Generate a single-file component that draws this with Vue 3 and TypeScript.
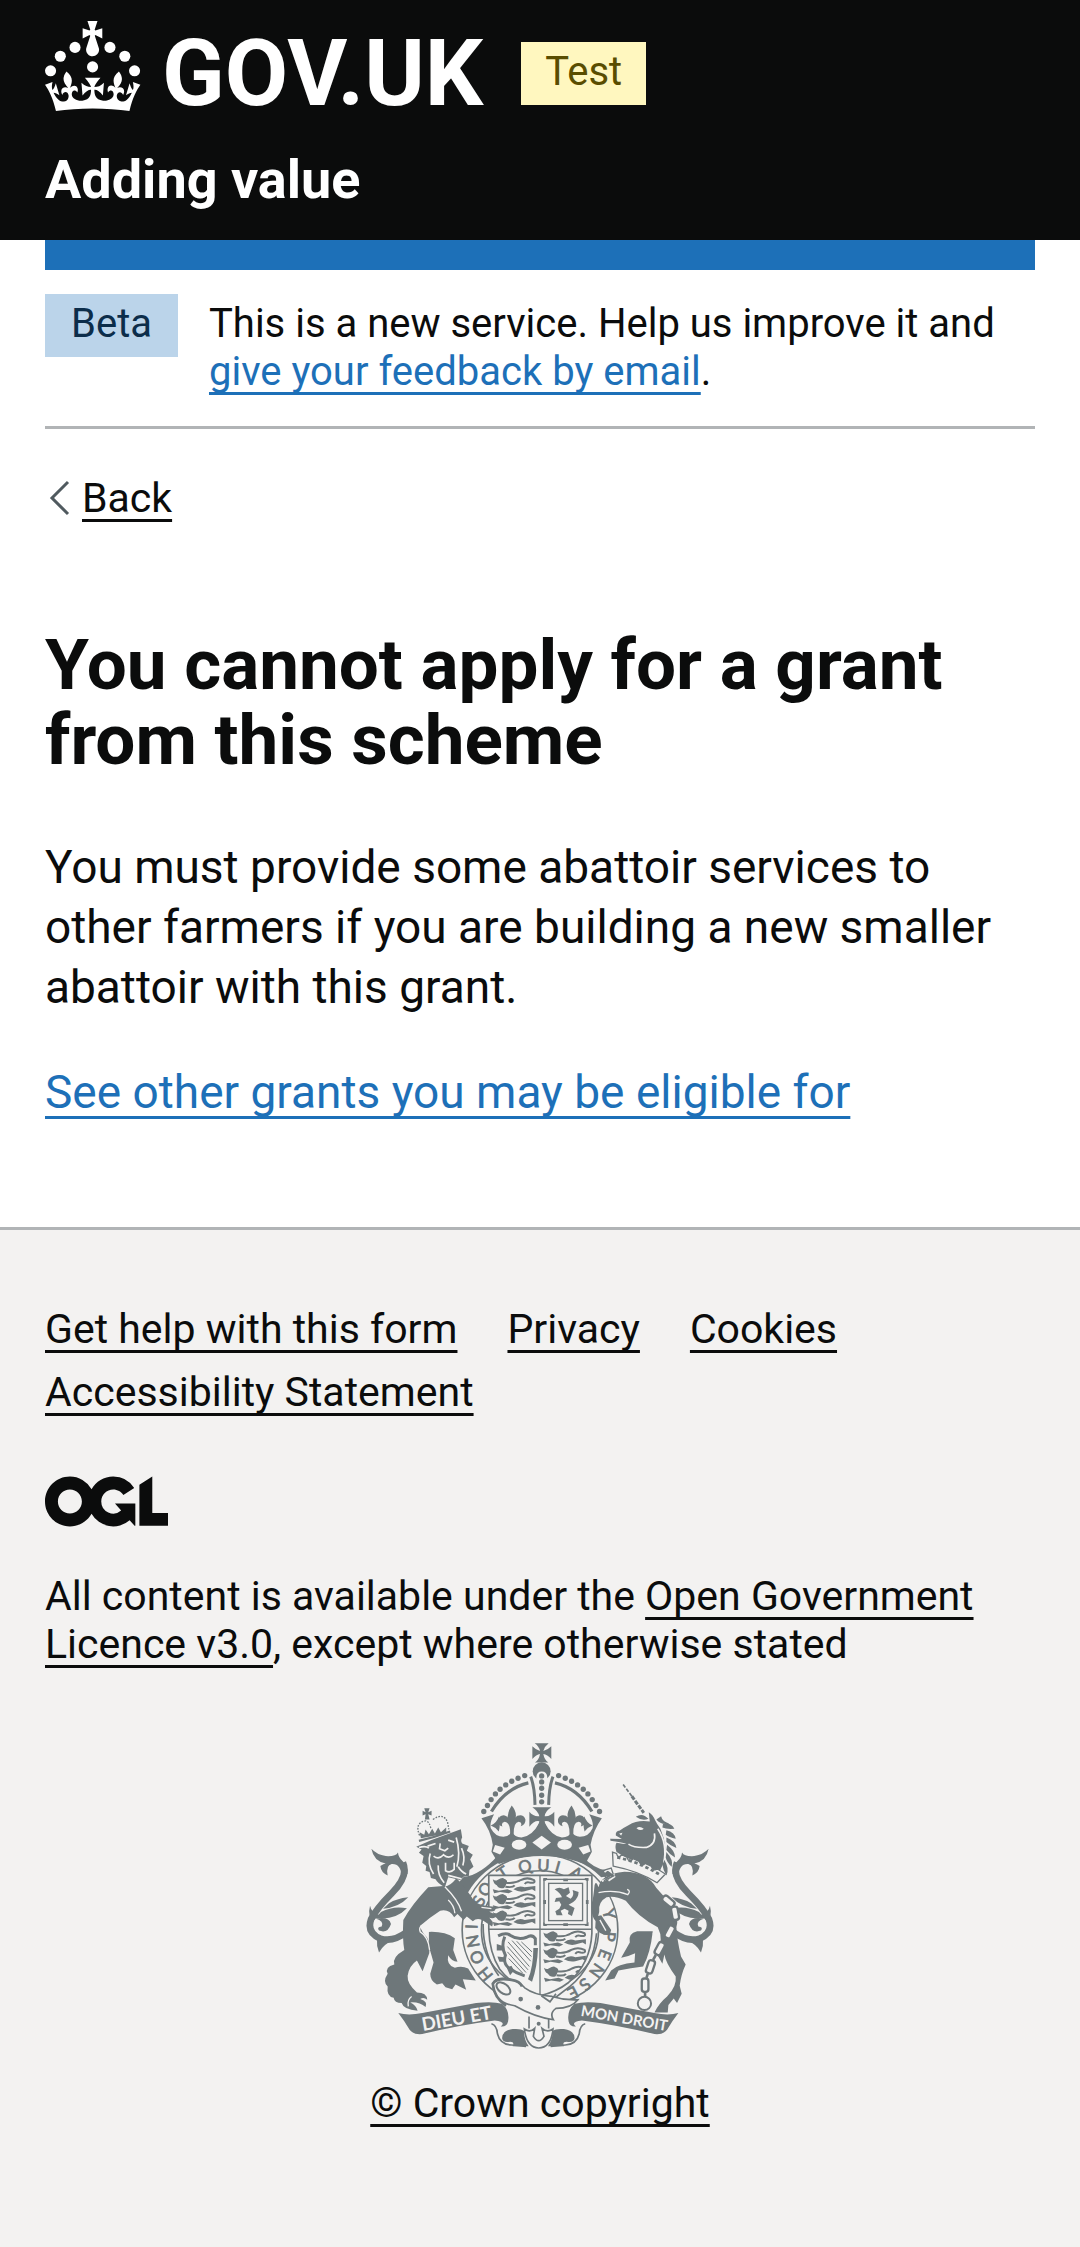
<script setup lang="ts">
interface FooterLink {
  label: string
  href: string
}

interface RingLetter {
  char: string
  x: number
  y: number
}

const footerLinks: FooterLink[] = [
  { label: 'Get help with this form', href: '#help' },
  { label: 'Privacy', href: '#privacy' },
  { label: 'Cookies', href: '#cookies' },
  { label: 'Accessibility Statement', href: '#accessibility' },
]

// Pearls on the right arch of the crown; the left arch mirrors them.
const pearls: [number, number][] = [
  [632, 166], [652, 174], [671, 183], [689, 194], [706, 207],
  [720, 221], [733, 238], [744, 256], [755, 274],
]

// Motto letters, placed by their centre on the garter ring.
const ringLetters: RingLetter[] = [
  { char: 'H', x: 412, y: 763 },
  { char: 'O', x: 387, y: 712 },
  { char: 'N', x: 375, y: 664 },
  { char: 'I', x: 371, y: 620 },
  { char: 'S', x: 393, y: 543 },
  { char: 'O', x: 412, y: 508 },
  { char: 'T', x: 465, y: 459 },
  { char: 'Q', x: 531, y: 439 },
  { char: 'U', x: 586, y: 437 },
  { char: 'I', x: 629, y: 442 },
  { char: 'A', x: 684, y: 460 },
  { char: 'Y', x: 783, y: 582 },
  { char: 'P', x: 784, y: 650 },
  { char: 'E', x: 770, y: 704 },
  { char: 'N', x: 746, y: 752 },
  { char: 'S', x: 711, y: 793 },
  { char: 'E', x: 675, y: 818 },
]

function ringTransform(letter: RingLetter): string {
  const angle = (Math.atan2(letter.x - 576, 630 - letter.y) * 180) / Math.PI
  return `translate(${letter.x} ${letter.y}) rotate(${angle.toFixed(1)})`
}

// Origins of the walking lions in the first and fourth quarters.
const shieldLions: [number, number][] = [
  [434, 474], [434, 522], [434, 572],
  [586, 634], [586, 684], [588, 740],
]

// Chain links: centre and tilt.
const links: [number, number, number][] = [
  [962, 544, -50], [982, 580, -10], [966, 636, 28],
  [936, 686, 28], [908, 741, 18], [892, 796, 0],
]
</script>

<template>
  <div class="page">
    <header class="header">
      <div class="brand">
        <a class="logo" href="#home" aria-label="GOV.UK">
          <svg class="crown" viewBox="0 0 64 60" aria-hidden="true">
            <circle cx="20" cy="17.6" r="3.7" />
            <circle cx="10.2" cy="23.5" r="3.7" />
            <circle cx="3.7" cy="33.2" r="3.7" />
            <circle cx="31.7" cy="30.6" r="3.7" />
            <circle cx="43.3" cy="17.6" r="3.7" />
            <circle cx="53.2" cy="23.5" r="3.7" />
            <circle cx="59.7" cy="33.2" r="3.7" />
            <path
              d="M33.1,9.8c.2-.1.3-.3.5-.5l4.6,2.4v-6.8l-4.6,1.5c-.1-.2-.3-.3-.5-.5l1.9-5.9h-6.7l1.9,5.9c-.2.1-.3.3-.5.5l-4.6-1.5v6.8l4.6-2.4c.1.2.3.3.5.5l-2.6,8c-.9,2.8,1.2,5.7,4.1,5.7h0c3,0,5.1-2.9,4.1-5.7l-2.6-8ZM37,37.9s-3.4,3.8-4.1,6.1c2.2,0,4.2-.5,6.4-2.8l-.7,8.5c-2-2.8-4.4-4.1-5.7-3.8.1,3.1.5,6.7,5.8,7.2,3.7.3,6.7-1.5,7-3.8.4-2.6-2-4.3-3.7-1.6-1.4-4.5,2.4-6.1,4.9-3.2-1.9-4.5-1.8-7.7,2.4-10.9,3,4,2.6,7.3-1.2,11.1,2.4-1.3,6.2,0,4,4.6-1.2-2.8-3.7-2.2-4.2.2-.3,1.7.7,3.7,3,4.2,1.9.3,4.7-.9,7-5.9-1.3,0-2.4.7-3.9,1.7l2.4-8c.6,2.3,1.4,3.7,2.2,4.5.6-1.6.5-2.8,0-5.3l5,1.8c-2.6,3.6-5.2,8.7-7.3,17.5-7.4-1.1-15.7-1.7-24.5-1.7h0c-8.8,0-17.1.6-24.5,1.7-2.1-8.9-4.7-13.9-7.3-17.5l5-1.8c-.5,2.5-.6,3.7,0,5.3.8-.8,1.6-2.3,2.2-4.5l2.4,8c-1.5-1-2.6-1.7-3.9-1.7,2.3,5,5.2,6.2,7,5.9,2.3-.4,3.3-2.4,3-4.2-.5-2.4-3-3.1-4.2-.2-2.2-4.6,1.6-6,4-4.6-3.7-3.7-4.2-7.1-1.2-11.1,4.2,3.2,4.3,6.4,2.4,10.9,2.5-2.8,6.3-1.3,4.9,3.2-1.8-2.7-4.1-1-3.7,1.6.3,2.3,3.3,4.1,7,3.8,5.4-.5,5.7-4.2,5.8-7.2-1.3-.2-3.7,1-5.7,3.8l-.7-8.5c2.2,2.3,4.2,2.7,6.4,2.8-.7-2.3-4.1-6.1-4.1-6.1h10.6,0Z"
            />
          </svg>
          <span class="wordmark">GOV.UK</span>
        </a>
        <strong class="tag tag-test">Test</strong>
      </div>
      <a class="service" href="#service">Adding value</a>
    </header>

    <div class="container">
      <div class="bar"></div>
      <div class="phase">
        <strong class="tag tag-beta">Beta</strong>
        <p class="phase-text">
          This is a new service. Help us improve it and
          <a class="link" href="#feedback">give your feedback by email</a>.
        </p>
      </div>
      <a class="back" href="#back">
        <svg class="chevron" viewBox="0 0 22 36" aria-hidden="true">
          <path d="M20 2 4 18 20 34" />
        </svg>
        <span class="back-text">Back</span>
      </a>
      <main class="main">
        <h1>You cannot apply for a grant from this scheme</h1>
        <p>
          You must provide some abattoir services to other farmers if you are
          building a new smaller abattoir with this grant.
        </p>
        <p><a class="link" href="#grants">See other grants you may be eligible for</a></p>
      </main>
    </div>

    <footer class="footer">
      <ul class="footer-links">
        <li v-for="item in footerLinks" :key="item.label">
          <a class="footer-link" :href="item.href">{{ item.label }}</a>
        </li>
      </ul>
      <svg class="ogl" viewBox="0 0 483.2 195.7" role="img" aria-label="Open Government Licence">
        <path
          d="M421.5 142.8V.1l-50.7 32.3v161.1h112.4v-50.7zm-122.3-9.6A47.12 47.12 0 0 1 221 97.8c0-26 21.1-47.1 47.1-47.1 16.7 0 31.4 8.7 39.7 21.8l42.7-27.2A97.63 97.63 0 0 0 268.1 0c-36.5 0-68.3 20.1-85.1 49.7A98 98 0 0 0 97.8 0C43.9 0 0 43.9 0 97.8s43.9 97.8 97.8 97.8c36.5 0 68.3-20.1 85.1-49.7a97.76 97.76 0 0 0 149.6 25.4l19.4 22.2h3v-87.8h-80l24.3 27.5zM97.8 145c-26 0-47.1-21.1-47.1-47.1s21.1-47.1 47.1-47.1 47.1 21.1 47.1 47.1S123.8 145 97.8 145"
        />
      </svg>
      <p class="licence">
        All content is available under the
        <a class="footer-link" href="#ogl">Open Government Licence v3.0</a>, except where otherwise stated
      </p>

      <a class="copyright" href="#copyright">
        <svg class="crest" viewBox="54 68 1044 920" aria-hidden="true">
          <defs>
            <g id="fleur">
              <path d="M491 256Q506 274 503 291Q500 304 495 314H487Q479 300 479 288Q480 272 491 256Z" />
              <path d="M486 345Q488 307 470 305Q458 307 463 319Q444 314 451 295Q461 280 475 288Q486 294 491 312Q496 294 508 287Q526 281 532 297Q534 313 518 318Q524 306 512 305Q496 307 497 345Z" />
              <path d="M428 316Q446 308 453 288Q458 312 452 334Q444 322 428 316Z" />
            </g>
            <g id="tail">
              <path class="line" stroke-width="20" d="M176 636Q134 668 96 656Q54 638 68 598Q84 566 130 520Q182 468 164 428" />
              <path d="M69 386Q86 404 112 408Q142 410 149 397Q150 412 164 424Q180 440 178 462L160 470Q158 430 130 432Q112 436 118 466Q98 458 96 438Q106 430 112 430Q76 424 69 386Z" />
              <path d="M180 532Q144 536 122 550L104 566Q150 564 180 532ZM176 565Q136 556 98 576L82 594Q140 602 176 565ZM65 557Q57 588 74 604L92 584Q70 580 65 557Z" />
              <path d="M82 596Q122 588 128 612Q118 642 92 632Q84 622 100 620Q108 604 82 596ZM86 660Q84 680 92 698Q106 672 134 662Z" />
            </g>
            <g id="passant">
              <path d="M0 4Q8 10 14 6Q30-4 34 2Q46 6 42 14Q38 26 34 30Q18 34 12 22Q4 20 0 4Z" />
              <path class="line" stroke-width="6" d="M38 14Q66 18 84 6Q104-4 124 6Q130 16 112 14Q102 10 96 18M38 26Q60 30 66 22" />
              <path d="M62 34Q78 20 96 28L128 24V40L118 34 96 40Q80 44 62 34ZM0 34 18 38 44 34 60 40 48 46 22 42 4 46Z" />
            </g>
            <clipPath id="shield-clip">
              <path d="M422 466H732V640Q728 730 662 788Q626 816 576 828Q500 806 455 748Q424 700 422 628Z" />
            </clipPath>
            <path id="dexter-scroll" d="M150 880Q180 888 222 880Q320 862 384 850Q432 844 462 852Q486 872 480 905Q476 922 458 920Q476 906 440 902Q330 916 222 943Q196 946 184 930Q170 906 150 880Z" />
            <g id="fold">
              <path class="line" stroke-width="5" d="M430 912Q446 916 448 942Q456 974 490 976L534 980" />
              <path d="M462 956Q462 932 494 928Q520 926 528 934Q528 960 542 980H494Q500 966 486 966Q464 970 462 956Z" />
            </g>
          </defs>

          <!-- Garter ring and motto -->
          <ellipse class="paper outline" cx="576" cy="630" rx="234" ry="226" />
          <ellipse class="paper outline" cx="576" cy="630" rx="176" ry="178" />
          <text
            v-for="(letter, index) in ringLetters"
            :key="`ring-${index}`"
            class="motto"
            :transform="ringTransform(letter)"
            dy="17"
          >{{ letter.char }}</text>
          <path d="M345 472Q400 464 450 405L490 410Q400 446 358 520L330 490Z" />
          <path d="M700 405Q740 450 780 452L800 466 760 472Q730 440 690 424Z" />

          <!-- Crown -->
          <path d="M560 69H602Q590 78 586 92Q598 90 610 78V116Q598 102 586 101Q589 118 601 127H561Q573 118 576 101Q565 103 553 116V78Q565 90 576 92Q573 78 560 69Z" />
          <circle cx="581" cy="153" r="27" />
          <path class="paper" d="M565 260V172Q566 154 581 154Q597 154 598 172V260Z" />
          <circle v-for="y in [167, 185, 204, 225, 245]" :key="`bead-${y}`" cx="581" :cy="y" r="8" />
          <path class="line" stroke-width="9" d="M548 169Q560 200 561 254M615 169Q603 200 602 254" />
          <g v-for="[x, y] in pearls" :key="`pearl-${x}`">
            <circle :cx="x" :cy="y" r="8" />
            <circle :cx="1162 - x" :cy="y" r="8" />
          </g>
          <path class="line" stroke-width="10" d="M621 188Q690 204 732 274M541 188Q472 204 430 274" />
          <path d="M400 294 438 282Q424 306 428 324Q442 350 466 350Q484 348 491 334Q500 352 520 352Q552 350 574 308H590Q612 350 642 352Q664 352 671 334Q678 348 696 350Q722 350 734 324Q738 306 724 282L762 294Q736 330 728 374L732 395 712 432Q581 384 452 432L430 395 434 374Q428 330 400 294Z" />
          <use href="#fleur" />
          <use href="#fleur" transform="translate(1162 0) scale(-1 1)" />
          <path d="M553 261H610Q592 272 590 288Q606 290 619 275V320Q606 300 590 303Q592 322 612 344H550Q572 322 574 303Q558 300 544 320V275Q556 290 574 288Q570 272 553 261Z" />
          <path class="paper" d="M581 347 609 367 581 388 553 367Z" />
          <ellipse class="paper" cx="513" cy="374" rx="22" ry="15" />
          <ellipse class="paper" cx="650" cy="374" rx="22" ry="15" />
          <path class="paper" d="M441 375 470 383 456 403 434 394ZM721 375 692 383 706 403 728 394Z" />

          <!-- Shield -->
          <path class="paper outline" d="M422 466H732V640Q728 730 662 788Q626 816 576 828Q500 806 455 748Q424 700 422 628Z" />
          <path class="line" stroke-width="4" d="M576 466V828M422 628H732" />
          <g clip-path="url(#shield-clip)">
            <use
              v-for="([x, y], index) in shieldLions"
              :key="`lion-${index}`"
              href="#passant"
              :transform="`translate(${x} ${y})`"
            />
          </g>
          <rect class="line" stroke-width="4" x="588" y="478" width="130" height="136" />
          <rect class="line" stroke-width="4" x="602" y="490" width="102" height="112" />
          <path d="M620 508Q634 498 648 508L662 502 666 518 654 528 668 536Q680 528 674 510L692 516Q692 534 676 546L662 554 680 564 672 588 660 582 662 572 650 566 638 572 644 586 626 586 622 574 634 566 640 554 634 544 620 546 624 534 642 532Q638 520 620 508Z" />
          <path d="M586 474h12l-4 8h-8ZM710 474h12v8h-8ZM586 606v12h12ZM722 606v12h-12ZM646 476h14v8h-14ZM646 610h14v8h-14ZM586 540h8v12h-8ZM714 540h8v12h-8Z" />
          <path class="line" stroke-width="9" d="M450 648Q474 636 486 646Q510 662 536 652Q552 642 562 656V676M470 650Q458 680 472 706Q464 730 482 744Q504 760 530 768" />
          <path d="M540 778Q556 740 556 684H570Q568 740 552 786ZM446 672l18 6v14h-18ZM448 710l20 2 4 14h-18ZM476 744l14-6 8 14-12 14Z" />
          <path class="line" stroke-width="3" d="M480 666 544 740M492 662 548 724M506 664 550 710M520 666 552 696M478 680 540 750M478 696 534 758M482 716 524 760" />
          <path class="line" stroke-width="5" d="M746 640Q738 740 666 800Q640 820 606 846M405 612Q404 700 452 768" />

          <!-- Lion supporter -->
          <use href="#tail" />
          <path d="M240 502Q190 555 165 600Q162 660 168 690Q130 712 138 734Q108 742 118 762Q102 786 118 800Q114 830 136 834Q138 850 160 850Q166 870 208 873Q204 856 186 848Q214 846 232 862Q240 846 216 838Q226 830 237 840Q236 818 206 818Q176 792 178 768Q182 738 206 722L223 754 243 700Q246 670 236 652Q222 640 215 618Q240 595 276 572Q304 566 318 592L328 582 346 600 356 590 374 604Q386 592 402 600L432 620Q440 604 420 592Q442 600 444 584L420 574Q446 578 442 560Q405 560 380 546Q350 500 325 475Q300 505 285 498Z" />
          <path d="M242 636Q290 634 320 655L315 690 328 726Q310 724 300 706Q294 736 320 744Q340 736 360 746L383 782 344 778 354 810 322 794 312 808 292 802 282 790 266 794Q246 784 246 762L256 728Q248 700 242 680Z" />
          <path class="cut" stroke-width="4" d="M236 612Q208 616 216 636Q240 650 244 690M300 540Q318 556 320 580M290 500Q330 540 340 574M190 830Q176 840 180 860M400 562 430 566" />
          <path d="M204 380 250 360 338 327 342 352Q336 362 342 370L362 378 356 392 374 404 366 418 376 440 364 450 362 468 346 470 336 480 300 472 290 502Q268 490 262 478L248 474 244 456 232 452 234 438 222 428 226 408 212 398 220 388Z" />
          <path class="cut" stroke-width="5" d="M212 382Q232 376 242 384M238 378 262 370M300 360 318 366M276 370 274 386 290 392 300 384M256 408Q272 420 286 404Q302 418 316 404M292 428V452Q306 460 318 448V428M324 352Q338 400 326 440M340 384Q352 410 344 436M330 440Q340 456 354 462M246 400Q236 430 256 462M270 436Q268 466 288 488M300 466 340 476" />
          <path class="line" stroke-width="7" d="M212 362Q258 352 306 334" />
          <path class="line" stroke-width="4" stroke-dasharray="5 4" d="M214 346Q198 308 232 302Q244 304 248 326M254 298Q286 276 298 306L302 328" />
          <path d="M228 264h16l-4 12 10-4v14l-10-4 4 16h-14l2-16-9 4v-14l9 4ZM218 354l-4-18 14 8 4-16 10 14 10-16 8 14 10-18 8 14 16-14v18Z" />

          <!-- Unicorn supporter -->
          <use href="#tail" transform="translate(1152 0) scale(-1 1)" />
          <path d="M752 502Q758 462 830 455Q900 456 926 504Q950 534 980 558Q994 600 986 622Q988 660 1000 710L1014 734Q1000 764 996 798L1002 822 988 850 978 836 962 856 960 878H920Q934 850 958 830Q988 800 984 770Q954 730 950 704L944 732 926 700Q950 660 930 622Q870 590 834 542Q800 526 776 532Q750 546 754 576L746 606Q730 594 731 562Q738 520 740 496Q744 480 752 502Z" />
          <path d="M915 634H868Q840 640 846 668L820 714Q846 708 862 700L860 728Q810 732 790 752L772 782 800 776 812 752Q850 744 886 740Q908 700 915 634ZM744 590 760 586 790 630 786 644Q760 650 742 624Z" />
          <path class="cut" stroke-width="4" d="M752 518Q800 508 840 524Q850 512 838 508M756 600 774 632M916 640Q930 664 914 690" />
          <path d="M804 346Q802 332 816 331Q828 322 842 315Q870 298 906 304L903 276Q916 284 922 300Q928 312 938 326Q962 380 946 432L934 458Q884 432 830 410L806 396Q800 378 806 368Q826 372 836 372Q820 366 788 362L787 356 822 357Z" />
          <path class="cut" stroke-width="5" d="M920 340Q926 372 896 382Q860 384 842 372M930 326Q960 370 948 430" />
          <path class="paper" d="M866 324Q876 316 888 326Q878 334 866 324ZM814 340l10-2-4 8Z" />
          <path d="M940 288Q944 304 964 310Q940 316 926 298ZM946 310Q970 306 980 326Q956 328 944 322ZM956 330Q982 336 984 356Q964 352 954 344ZM956 352Q984 362 986 384Q966 376 956 366ZM958 374Q982 392 982 412Q964 402 956 390ZM956 396Q978 420 972 440Q958 428 954 412ZM950 420Q966 446 956 466Q946 450 944 434ZM864 290Q884 276 902 296Q884 304 864 290Z" />
          <path class="line" stroke-width="5" stroke-dasharray="11 5" d="M826 193 852 228" />
          <path class="line" stroke-width="9" stroke-dasharray="13 4" d="M852 228 888 278" />
          <path class="paper outline-thin" d="M794 396 806 400Q810 418 822 404L838 412Q842 430 856 416L874 424Q882 442 892 430L910 438Q918 456 928 446L953 462 928 488Q870 452 796 438Z" />
          <path class="line" stroke-width="8" stroke-dasharray="10 8" d="M808 412Q870 424 936 464" />
          <path class="cut" stroke-width="5" d="M770 456 790 440 800 470 782 482M762 484 790 470" />
          <path class="line" stroke-width="4" d="M764 452 790 444 796 462 774 474ZM768 482 800 466" />
          <g v-for="([x, y, tilt], index) in links" :key="`link-${index}`">
            <rect
              class="paper link-shape"
              :transform="`translate(${x} ${y}) rotate(${tilt})`"
              x="-10" y="-20" width="20" height="40" rx="8"
            />
          </g>
          <path class="line" stroke-width="8" d="M976 604 970 618M954 654 948 664M924 706 916 720M900 762 896 774M892 816V830" />
          <circle class="line" stroke-width="6" cx="890" cy="851" r="20" />

          <!-- Strap and scrolls -->
          <path class="paper outline" d="M434 792Q440 772 474 776Q510 780 530 804Q560 826 612 830Q650 842 690 840Q670 866 624 866Q604 880 616 900Q560 892 500 858Q440 850 434 792Z" />
          <path class="line" stroke-width="8" d="M474 858Q438 834 434 792Q446 772 490 780Q516 784 522 800" />
          <ellipse class="line" stroke-width="6" cx="466" cy="806" rx="24" ry="14" transform="rotate(38 466 806)" />
          <circle cx="518" cy="838" r="7" />
          <circle cx="570" cy="863" r="7" />
          <path class="line" stroke-width="5" d="M580 828 606 846 624 822M543 890V926M602 898V926" />
          <circle cx="572" cy="912" r="6" />
          <use href="#dexter-scroll" />
          <use href="#dexter-scroll" transform="translate(1142 0) scale(-1 1)" />
          <use href="#fold" />
          <use href="#fold" transform="translate(1142 0) scale(-1 1)" />
          <path class="paper outline" d="M529 928Q546 940 560 926L556 950Q572 976 588 950L582 926Q598 940 615 928Q610 984 572 985Q536 984 529 928Z" />
          <text class="scroll-text" transform="translate(224 934) rotate(-10)" font-size="56">DIEU ET</text>
          <text class="scroll-text" transform="translate(697 888) rotate(10)" font-size="45">MON DROIT</text>
        </svg>
        <span class="copyright-text">© Crown copyright</span>
      </a>
    </footer>
  </div>
</template>

<style>
body {
  margin: 0;
  background: #f3f2f1;
}
</style>

<style scoped>
.page {
  font-family: Roboto, "Liberation Sans", sans-serif;
  font-size: 40px;
  line-height: 48px;
  color: #0b0c0c;
  background: #fff;
}

p,
h1,
ul {
  margin: 0;
  padding: 0;
}

.header {
  padding: 21px 45px 30px;
  background: #0b0c0c;
  color: #fff;
}

.brand {
  display: flex;
  gap: 38px;
  height: 90px;
  margin-bottom: 39px;
}

.logo {
  display: flex;
  gap: 21px;
  color: #fff;
  text-decoration: none;
}

.crown {
  width: 96px;
  height: 90px;
  fill: currentColor;
}

.wordmark {
  font-size: 92px;
  font-weight: 700;
  line-height: 106px;
}

.tag {
  flex: none;
  align-self: flex-start;
  padding: 6px 26px 9px;
  font-weight: 400;
}

.tag-test {
  margin-top: 21px;
  padding: 6px 24px 9px;
  background: #fff7bf;
  color: #594d00;
}

.tag-beta {
  background: #bbd4ea;
  color: #0c2d4a;
}

.service {
  display: block;
  font-size: 54px;
  font-weight: 700;
  line-height: 60px;
  color: #fff;
  text-decoration: none;
}

.container {
  padding: 0 45px;
}

.bar {
  height: 30px;
  background: #1d70b8;
}

.phase {
  display: flex;
  gap: 31px;
  padding: 24px 0 30px;
  border-bottom: 3px solid #b1b4b6;
}

.phase-text {
  padding-top: 6px;
}

.link,
.footer-link,
.back-text,
.copyright-text {
  text-decoration: underline;
  text-decoration-thickness: 3px;
  text-decoration-skip-ink: none;
  text-underline-offset: 7px;
}

.link {
  color: #1d70b8;
}

.back {
  display: flex;
  align-items: center;
  gap: 12px;
  width: fit-content;
  margin-top: 45px;
  padding-left: 3px;
  font-size: 41px;
  color: #0b0c0c;
  text-decoration: none;
}

.chevron {
  width: 22px;
  height: 36px;
  fill: none;
  stroke: #505a5f;
  stroke-width: 3px;
}

.main {
  padding: 105px 0;
  font-size: 46px;
  line-height: 60px;
}

.main h1 {
  margin-bottom: 60px;
  font-size: 71px;
  font-weight: 700;
  line-height: 75px;
}

.main p + p {
  margin-top: 45px;
}

.main .link {
  text-underline-offset: 8px;
}

.footer {
  padding: 75px 45px 120px;
  border-top: 3px solid #b1b4b6;
  background: #f3f2f1;
  font-size: 41px;
}

.footer-links {
  display: flex;
  flex-wrap: wrap;
  gap: 15px 50px;
  list-style: none;
}

.footer-link,
.copyright {
  color: #0b0c0c;
}

.ogl {
  display: block;
  width: 123px;
  height: 51px;
  margin: 60px 0 45px;
  fill: #0b0c0c;
}

.copyright {
  display: flex;
  flex-direction: column;
  align-items: center;
  gap: 30px;
  width: fit-content;
  margin: 75px auto 0;
  text-decoration: none;
}

.crest {
  width: 348px;
  height: 306px;
  fill: #6e777a;
  stroke: none;
}

.crest .paper {
  fill: #f3f2f1;
}

.crest .line {
  fill: none;
  stroke: #6e777a;
}

.crest .outline {
  stroke: #6e777a;
  stroke-width: 5px;
}

.crest .outline-thin {
  stroke: #6e777a;
  stroke-width: 4px;
}

.crest .link-shape {
  stroke: #6e777a;
  stroke-width: 7px;
}

.crest .cut {
  fill: none;
  stroke: #f3f2f1;
}

.motto {
  font-family: Lato, sans-serif;
  font-size: 50px;
  text-anchor: middle;
  stroke: #6e777a;
  stroke-width: 2px;
}

.scroll-text {
  font-family: Lato, sans-serif;
  font-weight: 700;
  fill: #f3f2f1;
}
</style>
